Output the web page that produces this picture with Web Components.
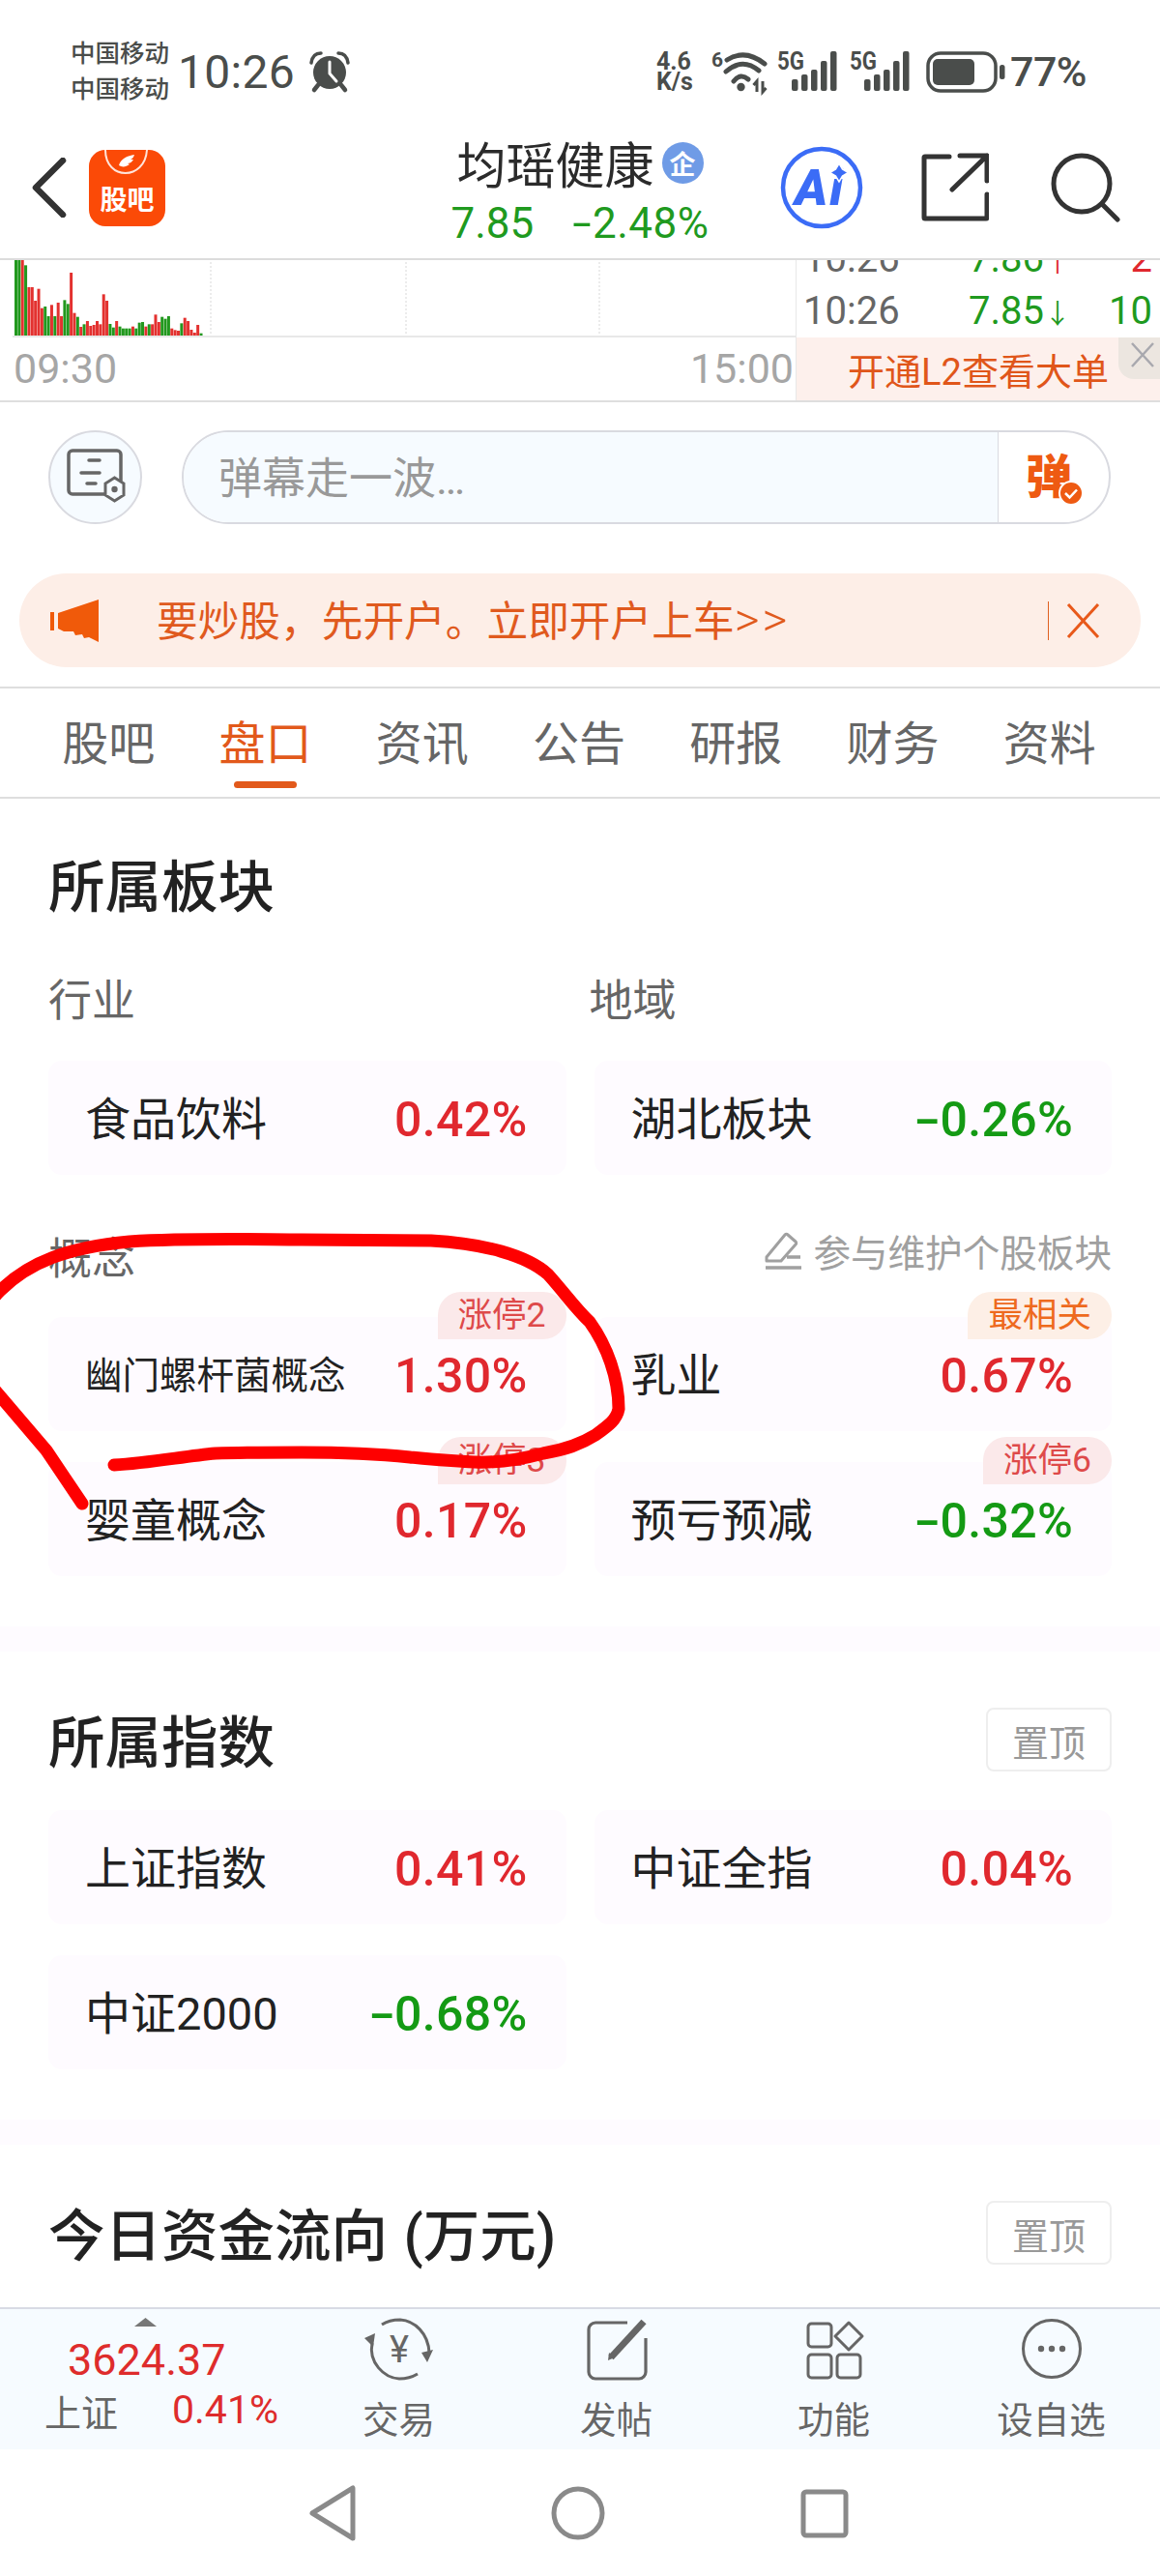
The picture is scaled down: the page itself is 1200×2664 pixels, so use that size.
<!DOCTYPE html>
<html lang="zh">
<head>
<meta charset="utf-8">
<title>均瑶健康</title>
<style>
  html, body {
    margin: 0;
    padding: 0;
    background: #fff;
    font-family: Roboto, "Noto Sans CJK SC", sans-serif;
    color: #222;
  }

  #app {
    position: relative;
    width: 1200px;
    height: 2664px;
    overflow: hidden;
    display: flex;
    flex-direction: column;
  }

  #content {
    flex: 1;
    min-height: 0;
    overflow: hidden;
  }
</style>
</head>
<body>
<div id="app">
  <status-bar></status-bar>
  <stock-header></stock-header>
  <mini-chart></mini-chart>
  <danmu-bar></danmu-bar>
  <promo-banner></promo-banner>
  <tab-bar></tab-bar>

  <div id="content">
    <sector-section heading="所属板块" top="55" bottom="52">
      <plate-grid style="margin-top:64px" gap="36">
        <sub-label>行业</sub-label>
        <sub-label style="margin-left:-5px">地域</sub-label>
        <plate-card name="食品饮料" pct="0.42%" tone="up"></plate-card>
        <plate-card name="湖北板块" pct="-0.26%" tone="down"></plate-card>
      </plate-grid>
      <concept-head></concept-head>
      <plate-grid gap="32">
        <plate-card name="幽门螺杆菌概念" name-size="38.5" pct="1.30%" tone="up" tag="涨停2"></plate-card>
        <plate-card name="乳业" pct="0.67%" tone="up" tag="最相关" tag-tone="orange"></plate-card>
        <plate-card name="婴童概念" pct="0.17%" tone="up" tag="涨停3"></plate-card>
        <plate-card name="预亏预减" pct="-0.32%" tone="down" tag="涨停6"></plate-card>
      </plate-grid>
    </sector-section>
    <section-band></section-band>
    <sector-section heading="所属指数" top="58" bottom="52">
      <pin-button slot="action"></pin-button>
      <plate-grid style="margin-top:40px" gap="32">
        <plate-card name="上证指数" pct="0.41%" tone="up"></plate-card>
        <plate-card name="中证全指" pct="0.04%" tone="up"></plate-card>
        <plate-card name="中证2000" pct="-0.68%" tone="down"></plate-card>
      </plate-grid>
    </sector-section>
    <section-band></section-band>
    <sector-section heading="今日资金流向 (万元)" top="58" bottom="0">
      <pin-button slot="action"></pin-button>
    </sector-section>
  </div>

  <bottom-bar></bottom-bar>
  <nav-bar></nav-bar>
  <ink-mark></ink-mark>
</div>

<script>
class StatusBar extends HTMLElement {
  constructor() {
    super();
    this.attachShadow({ mode: 'open' });
  }

  connectedCallback() {
    this.shadowRoot.innerHTML = `
      <style>
        :host {
          display: flex;
          align-items: center;
          box-sizing: border-box;
          height: 140px;
          padding: 37px 76px 29px 73px;
          color: #4a4d4b;
        }
        .carrier { font-size: 25.5px; line-height: 37px; font-weight: 500; }
        .time { font-size: 48px; margin-left: 9px; letter-spacing: 0.3px; }
        .alarm { margin-left: 15px; }
        .right { margin-left: auto; display: flex; align-items: center; }
        .speed { font-size: 25px; line-height: 21px; font-weight: 700; width: 42px; }
        .pct { font-size: 43px; font-weight: 500; margin-left: 5px; letter-spacing: -0.5px; }
        svg { display: block; overflow: visible; }
        text { font-family: Roboto, sans-serif; font-weight: 700; fill: #4a4d4b; }
      </style>
      <div class="carrier">中国移动<br>中国移动</div>
      <div class="time">10:26</div>
      <svg class="alarm" width="42" height="44" viewBox="0 0 42 44">
        <circle cx="21" cy="23" r="17" fill="#4a4d4b"/>
        <path d="M21 12v12l7 8" fill="none" stroke="#fff" stroke-width="3" stroke-linecap="round"/>
        <path d="M2 13C3 6 7 3 12 3M40 13C39 6 35 3 30 3" fill="none" stroke="#4a4d4b" stroke-width="3.5" stroke-linecap="round"/>
        <path d="M9 36l-4 5M33 36l4 5" stroke="#4a4d4b" stroke-width="4.5" stroke-linecap="round"/>
      </svg>
      <div class="right">
        <div class="speed">4.6<br>K/s</div>
        <svg style="margin-left:16px" width="58" height="46" viewBox="0 0 58 46">
          <text x="-1" y="18" font-size="21">6</text>
          <g fill="none" stroke="#4a4d4b" stroke-linecap="round" stroke-width="5">
            <path d="M15 11Q34 -1 54 15"/>
            <path d="M14 23Q31 8 48 22"/>
            <path d="M22 33Q29 24 37 31"/>
          </g>
          <circle cx="29.5" cy="39" r="4.2" fill="#4a4d4b"/>
          <path d="M46 44V33l-3.5 4M52 33v11l3.5-4" fill="none" stroke="#4a4d4b" stroke-width="3"/>
        </svg>
        <svg style="margin-left:9px" width="62" height="42" viewBox="0 0 62 42">
          <text x="0" y="19" font-size="25" textLength="28" lengthAdjust="spacingAndGlyphs">5G</text>
          <rect x="15" y="29" width="6.5" height="12" rx="2" fill="#4a4d4b"/>
          <rect x="25" y="24" width="6.5" height="17" rx="2" fill="#4a4d4b"/>
          <rect x="35" y="19" width="6.5" height="22" rx="2" fill="#4a4d4b"/>
          <rect x="45" y="10" width="6.5" height="31" rx="2" fill="#4a4d4b"/>
          <rect x="55" y="0" width="6.5" height="41" rx="2" fill="#4a4d4b"/>
        </svg>
        <svg style="margin-left:13px" width="62" height="42" viewBox="0 0 62 42">
          <text x="0" y="19" font-size="25" textLength="28" lengthAdjust="spacingAndGlyphs">5G</text>
          <rect x="15" y="29" width="6.5" height="12" rx="2" fill="#4a4d4b"/>
          <rect x="25" y="24" width="6.5" height="17" rx="2" fill="#4a4d4b"/>
          <rect x="35" y="19" width="6.5" height="22" rx="2" fill="#4a4d4b"/>
          <rect x="45" y="10" width="6.5" height="31" rx="2" fill="#4a4d4b"/>
          <rect x="55" y="0" width="6.5" height="41" rx="2" fill="#4a4d4b"/>
        </svg>
        <svg style="margin-left:17px" width="82" height="43" viewBox="0 0 82 43">
          <rect x="2" y="2" width="70" height="39" rx="13" fill="none" stroke="#4a4d4b" stroke-width="3.5"/>
          <rect x="7" y="8" width="43" height="27" rx="5" fill="#4a4d4b"/>
          <rect x="76" y="14" width="5.5" height="15" rx="2.5" fill="#4a4d4b"/>
        </svg>
        <div class="pct">77%</div>
      </div>
    `;
  }
}
customElements.define('status-bar', StatusBar);

class StockHeader extends HTMLElement {
  constructor() {
    super();
    this.attachShadow({ mode: 'open' });
  }

  connectedCallback() {
    this.shadowRoot.innerHTML = `
      <style>
        :host {
          display: grid;
          grid-template-columns: 1fr auto 1fr;
          box-sizing: border-box;
          height: 129px;
          border-bottom: 2px solid #dcdcdc;
        }
        .left {
          display: flex;
          align-items: center;
          gap: 23px;
          padding: 0 0 19px 33px;
        }
        .center { text-align: center; }
        .title {
          display: flex;
          align-items: center;
          justify-content: center;
          height: 56px;
          font-size: 51px;
          color: #2b2b2b;
        }
        .badge {
          display: flex;
          align-items: center;
          justify-content: center;
          width: 43px;
          height: 43px;
          margin-left: 8px;
          border-radius: 50%;
          background: #6f9be6;
          color: #fff;
          font-size: 27px;
          font-weight: 700;
        }
        .quote {
          display: flex;
          justify-content: center;
          gap: 40px;
          height: 70px;
          line-height: 70px;
          font-size: 44px;
          color: #1f9a1f;
        }
        .rate { letter-spacing: 0.5px; }
        .sign { display: inline-block; transform: scaleX(1.6); margin: 0 4px; }
        .right {
          display: flex;
          align-items: center;
          justify-content: flex-end;
          padding: 0 41px 19px 0;
        }
        svg { display: block; }
        .logo text { font-family: "Noto Sans CJK SC", sans-serif; font-weight: 700; }
        .ai text { font-family: Roboto, sans-serif; font-weight: 900; font-style: italic; }
      </style>
      <div class="left">
        <svg width="36" height="62" viewBox="0 0 36 62">
          <path d="M32 3L4 31l28 28" fill="none" stroke="#333" stroke-width="6.5" stroke-linecap="round" stroke-linejoin="round"/>
        </svg>
        <svg class="logo" width="79" height="79" viewBox="0 0 79 79">
          <rect width="79" height="79" rx="17" fill="#fb4a07"/>
          <path d="M17 0C17 32 58 32 60 0" fill="none" stroke="#fff" stroke-opacity=".85" stroke-width="2"/>
          <path d="M31 16C33 9 40 6 47 5C46 8 45 9 43 10L46 10C44 13 42 14 40 14L42 15C38 18 34 18 31 16Z" fill="#fff"/>
          <text x="39.5" y="62" font-size="28" fill="#fff" text-anchor="middle">股吧</text>
        </svg>
      </div>
      <div class="center">
        <div class="title">均瑶健康<span class="badge">企</span></div>
        <div class="quote"><span>7.85</span><span class="rate"><span class="sign">-</span>2.48%</span></div>
      </div>
      <div class="right">
        <svg class="ai" width="90" height="90" viewBox="0 0 90 90">
          <circle cx="45" cy="45" r="40" fill="none" stroke="#3b6cf6" stroke-width="4.5"/>
          <text x="43" y="63" font-size="52" fill="#3b6cf6" text-anchor="middle" letter-spacing="2">Ai</text>
          <path d="M63 20l3.5 6 6 3.5-6 3.5-3.5 6-3.5-6-6-3.5 6-3.5z" fill="#3b6cf6" stroke="#fff" stroke-width="1.5"/>
        </svg>
        <svg style="margin-left:58px" width="70" height="72" viewBox="0 0 70 72">
          <path d="M29 4H4a1 1 0 0 0-1 1v62a1 1 0 0 0 1 1h63a1 1 0 0 0 1-1V43" fill="none" stroke="#333" stroke-width="5" stroke-linecap="round"/>
          <path d="M32 38L68 3M40 3h28v26" fill="none" stroke="#333" stroke-width="5" stroke-linecap="round" stroke-linejoin="round"/>
        </svg>
        <svg style="margin-left:62px" width="74" height="74" viewBox="0 0 74 74">
          <circle cx="34" cy="33" r="29" fill="none" stroke="#333" stroke-width="5"/>
          <path d="M55 54l16 16" stroke="#333" stroke-width="5" stroke-linecap="round"/>
        </svg>
      </div>
    `;
  }
}
customElements.define('stock-header', StockHeader);

const VOLUME_BARS = 'g240 g240 r240 g218 r150 r150 r108 r145 r85 g90 g60 r95 g60 r102 r60 g110 g98 r195 r70 g58 r27 g35 r45 r30 r33 r45 r35 r128 r108 g36 g25 r45 g28 g22 g22 g22 r28 g22 g40 g42 r28 g35 r35 r65 r42 g58 g52 g60 r22 r17 r15 g38 r55 r45 r18 r9 r33 g7'.split(' ');

class MiniChart extends HTMLElement {
  constructor() {
    super();
    this.attachShadow({ mode: 'open' });
  }

  connectedCallback() {
    const bars = VOLUME_BARS.map((bar, i) => {
      const height = Number(bar.slice(1)) / 3;
      const color = bar[0] === 'g' ? '#22981e' : '#e3312f';
      return `<rect x="${15 + i * 3.36}" y="${80 - height}" width="3" height="${height}" fill="${color}"/>`;
    }).join('');

    this.shadowRoot.innerHTML = `
      <style>
        :host {
          display: flex;
          height: 145px;
          border-bottom: 2px solid #dedede;
        }
        .plot { width: 823px; flex-shrink: 0; }
        .axis { display: block; border-bottom: 2px solid #e8e8e8; margin-left: 13px; }
        .times {
          display: flex;
          justify-content: space-between;
          height: 65px;
          line-height: 65px;
          padding: 0 2px 0 14px;
          font-size: 43px;
          color: #a6a6a6;
        }
        .side {
          flex: 1;
          min-width: 0;
          display: flex;
          flex-direction: column;
          border-left: 1px solid #e8e8e8;
        }
        .ticks {
          height: 80px;
          display: flex;
          flex-direction: column;
          justify-content: flex-end;
          overflow: hidden;
          flex-shrink: 0;
        }
        .row {
          display: flex;
          flex-shrink: 0;
          height: 53px;
          line-height: 53px;
          padding: 0 8px 0 7px;
          font-size: 40px;
          margin-bottom: 1px;
        }
        .t { width: 171px; color: #666; }
        .p { color: #1f9a1f; }
        .q { margin-left: auto; }
        .arrow { font-size: 28px; }
        .red { color: #e0282e; }
        .green { color: #1f9a1f; }
        .l2 {
          position: relative;
          flex: 1;
          display: flex;
          align-items: center;
          justify-content: center;
          background: #fdf0ec;
          color: #e0561a;
          font-size: 38px;
        }
        .close {
          position: absolute;
          top: 0;
          right: 0;
          width: 43px;
          height: 43px;
          border-bottom-left-radius: 16px;
          background: #ece6e0;
        }
        .close svg { display: block; }
      </style>
      <div class="plot">
        <svg class="axis" width="810" height="78" viewBox="13 2 810 78">
          <g stroke="#d8d8d8" stroke-width="1" stroke-dasharray="2 2">
            <path d="M218 0V80M420 0V80M620 0V80"/>
          </g>
          ${bars}
        </svg>
        <div class="times"><span>09:30</span><span>15:00</span></div>
      </div>
      <div class="side">
        <div class="ticks">
          <div class="row"><span class="t">10:26</span><span class="p">7.86<span class="arrow red">↑</span></span><span class="q red">2</span></div>
          <div class="row"><span class="t">10:26</span><span class="p">7.85<span class="arrow">↓</span></span><span class="q green">10</span></div>
        </div>
        <div class="l2">开通L2查看大单
          <div class="close">
            <svg width="43" height="43" viewBox="0 0 43 43">
              <path d="M14 6L36 30M36 6L14 30" stroke="#a8a8ae" stroke-width="2.5"/>
            </svg>
          </div>
        </div>
      </div>
    `;
  }
}
customElements.define('mini-chart', MiniChart);

class DanmuBar extends HTMLElement {
  constructor() {
    super();
    this.attachShadow({ mode: 'open' });
  }

  connectedCallback() {
    this.shadowRoot.innerHTML = `
      <style>
        :host {
          display: flex;
          gap: 41px;
          padding: 29px 51px 51px 50px;
        }
        .circle {
          width: 97px;
          height: 97px;
          box-sizing: border-box;
          border: 2px solid #d9dae0;
          border-radius: 50%;
          background: #f6fbff;
          display: flex;
          align-items: center;
          justify-content: center;
          flex-shrink: 0;
        }
        .input {
          flex: 1;
          display: flex;
          height: 97px;
          box-sizing: border-box;
          border: 2px solid #d9dae0;
          border-radius: 50px;
          overflow: hidden;
        }
        .placeholder {
          flex: 1;
          background: #f6fbff;
          color: #999;
          font-size: 45px;
          line-height: 97px;
          padding-left: 36px;
        }
        .send {
          width: 115px;
          border-left: 1px solid #d9dae0;
          display: flex;
          align-items: center;
          padding-left: 28px;
          box-sizing: border-box;
        }
        .send svg { display: block; }
        .send text { font-family: "Noto Sans CJK SC", sans-serif; font-weight: 900; }
      </style>
      <div class="circle">
        <svg width="64" height="60" viewBox="0 0 64 60">
          <path d="M47 47H8a4 4 0 0 1-4-4V6a4 4 0 0 1 4-4h46a4 4 0 0 1 4 4v27" fill="none" stroke="#666" stroke-width="3.5" stroke-linecap="round"/>
          <path d="M25 12h11M17 25h19M23 36h9" stroke="#666" stroke-width="3.5" stroke-linecap="round"/>
          <path d="M51.5 30l9.5 6v12l-9.5 6-9.5-6V36z" fill="#f6fbff" stroke="#666" stroke-width="3"/>
          <circle cx="51.5" cy="42" r="3.2" fill="#666"/>
        </svg>
      </div>
      <div class="input">
        <div class="placeholder">弹幕走一波…</div>
        <div class="send">
          <svg width="62" height="62" viewBox="0 0 62 62">
            <text x="0" y="47" font-size="48" fill="#ee5a12">弹</text>
            <circle cx="47" cy="47" r="12" fill="#ee5a12" stroke="#fff" stroke-width="2"/>
            <path d="M41 47l4.5 4.5 7.5-8" fill="none" stroke="#fff" stroke-width="2.5"/>
          </svg>
        </div>
      </div>
    `;
  }
}
customElements.define('danmu-bar', DanmuBar);

class PromoBanner extends HTMLElement {
  constructor() {
    super();
    this.attachShadow({ mode: 'open' });
  }

  connectedCallback() {
    this.shadowRoot.innerHTML = `
      <style>
        :host {
          display: flex;
          align-items: center;
          height: 97px;
          margin: 0 20px 20px;
          padding: 0 42px 0 32px;
          border-radius: 50px;
          background: #fdeee7;
        }
        .text {
          margin: -6px 0 0 60px;
          font-size: 42.7px;
          color: #e05a1e;
        }
        .more { font-size: 50px; line-height: 40px; font-weight: 300; letter-spacing: 3px; }
        .bar { margin-left: auto; width: 1px; height: 40px; background: #e06020; }
        svg { display: block; flex-shrink: 0; }
      </style>
      <svg width="50" height="44" viewBox="0 0 50 44">
        <rect x="0" y="13" width="4" height="19" fill="#f05a0a"/>
        <path d="M8 14L50 0V44L40 39L35 40L33 36L26 37L24 33H14L8 30Z" fill="#f05a0a"/>
      </svg>
      <div class="text">要炒股，先开户。立即开户上车<span class="more">&gt;&gt;</span></div>
      <div class="bar"></div>
      <svg style="margin-left:18px" width="35" height="38" viewBox="0 0 35 38">
        <path d="M2 2L33 36M33 2L2 36" stroke="#e8591a" stroke-width="3"/>
      </svg>
    `;
  }
}
customElements.define('promo-banner', PromoBanner);

class TabBar extends HTMLElement {
  constructor() {
    super();
    this.attachShadow({ mode: 'open' });
  }

  connectedCallback() {
    const tabs = ['股吧', '盘口', '资讯', '公告', '研报', '财务', '资料'];
    this.shadowRoot.innerHTML = `
      <style>
        :host {
          display: flex;
          height: 112px;
          padding: 0 33px 0 31px;
          border-top: 2px solid #dedede;
          border-bottom: 2px solid #dedede;
        }
        .tab {
          position: relative;
          flex: 1;
          text-align: center;
          font-size: 48px;
          line-height: 115px;
          color: #666;
        }
        .tab.active { color: #e2591b; }
        .tab.active::after {
          content: '';
          position: absolute;
          left: 50%;
          bottom: 9px;
          width: 65px;
          height: 7px;
          margin-left: -32px;
          border-radius: 4px;
          background: #e2591b;
        }
      </style>
      ${tabs.map((tab, i) => `<div class="tab ${i === 1 ? 'active' : ''}">${tab}</div>`).join('')}
    `;
  }
}
customElements.define('tab-bar', TabBar);

class SectorSection extends HTMLElement {
  constructor() {
    super();
    this.attachShadow({ mode: 'open' });
  }

  connectedCallback() {
    const top = this.getAttribute('top') || 0;
    const bottom = this.getAttribute('bottom') || 0;
    this.shadowRoot.innerHTML = `
      <style>
        :host {
          display: block;
          padding: ${top}px 50px ${bottom}px;
        }
        .head {
          display: flex;
          align-items: center;
          justify-content: space-between;
          height: 66px;
        }
        h2 {
          margin: 8px 0 0;
          font-size: 58.5px;
          line-height: 66px;
          font-weight: 500;
          word-spacing: 2px;
          color: #222;
        }
      </style>
      <div class="head">
        <h2>${this.getAttribute('heading') || ''}</h2>
        <slot name="action"></slot>
      </div>
      <slot></slot>
    `;
  }
}
customElements.define('sector-section', SectorSection);

class PinButton extends HTMLElement {
  constructor() {
    super();
    this.attachShadow({ mode: 'open' });
  }

  connectedCallback() {
    this.shadowRoot.innerHTML = `
      <style>
        :host {
          display: flex;
          align-items: center;
          justify-content: center;
          box-sizing: border-box;
          width: 130px;
          height: 66px;
          border: 2px solid #eeeeee;
          border-radius: 8px;
          font-size: 38px;
          color: #999;
        }
      </style>
      置顶
    `;
  }
}
customElements.define('pin-button', PinButton);

class PlateGrid extends HTMLElement {
  constructor() {
    super();
    this.attachShadow({ mode: 'open' });
  }

  connectedCallback() {
    this.shadowRoot.innerHTML = `
      <style>
        :host {
          display: grid;
          grid-template-columns: 1fr 1fr;
          column-gap: 29px;
          row-gap: ${this.getAttribute('gap') || 32}px;
        }
      </style>
      <slot></slot>
    `;
  }
}
customElements.define('plate-grid', PlateGrid);

class SubLabel extends HTMLElement {
  constructor() {
    super();
    this.attachShadow({ mode: 'open' });
  }

  connectedCallback() {
    this.shadowRoot.innerHTML = `
      <style>
        :host {
          display: block;
          height: 50px;
          line-height: 50px;
          font-size: 45px;
          color: #666;
        }
      </style>
      <slot></slot>
    `;
  }
}
customElements.define('sub-label', SubLabel);

class ConceptHead extends HTMLElement {
  constructor() {
    super();
    this.attachShadow({ mode: 'open' });
  }

  connectedCallback() {
    this.shadowRoot.innerHTML = `
      <style>
        :host {
          display: flex;
          align-items: center;
          height: 50px;
          margin: 58px 0 39px;
        }
        .label { font-size: 45px; color: #666; }
        .link {
          display: flex;
          align-items: center;
          gap: 11px;
          margin: -10px 0 0 auto;
          font-size: 38.6px;
          color: #a0a0a0;
        }
        svg { display: block; }
      </style>
      <div class="label">概念</div>
      <div class="link">
        <svg width="40" height="40" viewBox="0 0 40 40">
          <path d="M3 27L22 4a2 2 0 0 1 3 0l8 7a2 2 0 0 1 0 3L18 31H3z" fill="none" stroke="#a0a0a0" stroke-width="3" stroke-linejoin="round"/>
          <path d="M24 27h14M2 38h37" stroke="#a0a0a0" stroke-width="3.5"/>
        </svg>
        参与维护个股板块
      </div>
    `;
  }
}
customElements.define('concept-head', ConceptHead);

class PlateCard extends HTMLElement {
  constructor() {
    super();
    this.attachShadow({ mode: 'open' });
  }

  connectedCallback() {
    const tag = this.getAttribute('tag');
    const tagTone = this.getAttribute('tag-tone') || 'red';
    const tone = this.getAttribute('tone') || 'up';
    const nameSize = this.getAttribute('name-size') || 47;
    const pct = this.getAttribute('pct');
    const pctHtml = pct[0] === '-' ? `<span class="sign">-</span>${pct.slice(1)}` : pct;
    this.shadowRoot.innerHTML = `
      <style>
        :host {
          position: relative;
          display: flex;
          align-items: center;
          justify-content: space-between;
          box-sizing: border-box;
          height: 118px;
          padding: 0 40px 0 38px;
          border-radius: 14px;
          background: #fefbff;
        }
        .name { font-size: ${nameSize}px; color: #222; white-space: nowrap; margin-top: -5px; }
        .pct { font-size: 50px; font-weight: 500; letter-spacing: 0.3px; margin-top: 3px; }
        .sign { display: inline-block; transform: scaleX(1.6); margin: 0 4px; }
        .up { color: #e0282e; }
        .down { color: #149a14; }
        .tag {
          position: absolute;
          top: -26px;
          right: 0;
          height: 49px;
          line-height: 49px;
          padding: 0 21px;
          border-radius: 24px 24px 24px 0;
          font-size: 35.5px;
        }
        .tag.red { background: #fbe9ea; color: #de4a4a; }
        .tag.orange { background: #fdefe6; color: #ee6a1e; }
      </style>
      <span class="name">${this.getAttribute('name')}</span>
      <span class="pct ${tone}">${pctHtml}</span>
      ${tag ? `<span class="tag ${tagTone}">${tag}</span>` : ''}
    `;
  }
}
customElements.define('plate-card', PlateCard);

class SectionBand extends HTMLElement {
  constructor() {
    super();
    this.attachShadow({ mode: 'open' });
  }

  connectedCallback() {
    this.shadowRoot.innerHTML = `
      <style>
        :host { display: block; height: 26px; background: #fefbff; }
      </style>
    `;
  }
}
customElements.define('section-band', SectionBand);

class BottomBar extends HTMLElement {
  constructor() {
    super();
    this.attachShadow({ mode: 'open' });
  }

  connectedCallback() {
    this.shadowRoot.innerHTML = `
      <style>
        :host {
          display: flex;
          flex-shrink: 0;
          box-sizing: border-box;
          height: 147px;
          border-top: 2px solid #d8dbe4;
          background: #f6fbff;
        }
        .quote { width: 300px; flex-shrink: 0; box-sizing: border-box; padding: 9px 0 0 46px; }
        .caret { display: block; margin-left: 93px; }
        .value { margin: 12px 0 0 24px; font-size: 45px; line-height: 46px; color: #de2c2c; }
        .sub { display: flex; align-items: center; height: 56px; }
        .sub b { font-weight: 400; font-size: 38px; color: #666; }
        .sub i { font-style: normal; font-size: 41px; color: #de2c2c; margin-left: 56px; }
        .tool { flex: 1; text-align: center; padding-top: 9px; }
        .tool svg { display: block; margin: 0 auto; }
        .tool div { margin-top: 15px; font-size: 37.5px; line-height: 50px; color: #666; }
        .tool text { font-family: Roboto, sans-serif; fill: #666; }
      </style>
      <div class="quote">
        <svg class="caret" width="23" height="9" viewBox="0 0 23 9"><path d="M11.5 0L23 9H0z" fill="#777"/></svg>
        <div class="value">3624.37</div>
        <div class="sub"><b>上证</b><i>0.41%</i></div>
      </div>
      <div class="tool">
        <svg width="80" height="66" viewBox="0 0 80 66">
          <path d="M12 26C8 46 24 62 40 63C46 63 54 61 59 58" fill="none" stroke="#666" stroke-width="3"/>
          <path d="M22 7C28 3 34 2 41 2C56 3 70 16 71 36" fill="none" stroke="#666" stroke-width="3"/>
          <path d="M4 21L15 16L13 30Z" fill="#666"/>
          <path d="M63 36L75 33L69 46Z" fill="#666"/>
          <text x="40" y="46" font-size="38" text-anchor="middle">¥</text>
        </svg>
        <div>交易</div>
      </div>
      <div class="tool">
        <svg width="66" height="66" viewBox="0 0 66 66">
          <path d="M44 5H11a7 7 0 0 0-7 7v44a7 7 0 0 0 7 7h45a7 7 0 0 0 7-7V21" fill="none" stroke="#666" stroke-width="3.2"/>
          <path d="M27 41L61 4" stroke="#666" stroke-width="7"/>
          <path d="M24 44l1-8 6 5z" fill="#666"/>
        </svg>
        <div>发帖</div>
      </div>
      <div class="tool">
        <svg width="66" height="66" viewBox="0 0 66 66">
          <g fill="none" stroke="#666" stroke-width="3">
            <rect x="6" y="6" width="24" height="24" rx="3.5"/>
            <rect x="6" y="38" width="24" height="24" rx="3.5"/>
            <rect x="36" y="38" width="24" height="24" rx="3.5"/>
            <path d="M48 5l14 14-14 14-14-14z" stroke-linejoin="round"/>
          </g>
        </svg>
        <div>功能</div>
      </div>
      <div class="tool">
        <svg width="66" height="66" viewBox="0 0 66 66">
          <circle cx="33" cy="32" r="29.5" fill="none" stroke="#666" stroke-width="3"/>
          <circle cx="22" cy="32" r="3.2" fill="#666"/>
          <circle cx="33" cy="32" r="3.2" fill="#666"/>
          <circle cx="44" cy="32" r="3.2" fill="#666"/>
        </svg>
        <div>设自选</div>
      </div>
    `;
  }
}
customElements.define('bottom-bar', BottomBar);

class NavBar extends HTMLElement {
  constructor() {
    super();
    this.attachShadow({ mode: 'open' });
  }

  connectedCallback() {
    this.shadowRoot.innerHTML = `
      <style>
        :host {
          display: flex;
          align-items: center;
          flex-shrink: 0;
          box-sizing: border-box;
          height: 131px;
          padding: 0 0 0 318px;
          background: #fff;
        }
        svg { display: block; }
      </style>
      <svg width="52" height="60" viewBox="0 0 52 60">
        <path d="M5 30L47 4V56Z" fill="none" stroke="#8a8a8a" stroke-width="5" stroke-linejoin="round"/>
      </svg>
      <svg style="margin-left:198px" width="60" height="60" viewBox="0 0 60 60">
        <circle cx="30" cy="30" r="25" fill="none" stroke="#8a8a8a" stroke-width="5"/>
      </svg>
      <svg style="margin-left:197px" width="56" height="60" viewBox="0 0 56 60">
        <rect x="6" y="8" width="44" height="45" rx="3" fill="none" stroke="#8a8a8a" stroke-width="5"/>
      </svg>
    `;
  }
}
customElements.define('nav-bar', NavBar);

// hand drawn circle on top of the screenshot, its place on the page is the content
class InkMark extends HTMLElement {
  constructor() {
    super();
    this.attachShadow({ mode: 'open' });
  }

  connectedCallback() {
    this.shadowRoot.innerHTML = `
      <style>
        :host {
          position: absolute;
          top: 0;
          left: 0;
          pointer-events: none;
        }
        svg { display: block; }
      </style>
      <svg width="1200" height="2664" viewBox="0 0 1200 2664">
        <path d="M85 1555L48 1500L-5 1438C-40 1400 -30 1365 0 1335C30 1305 70 1290 134 1284C200 1280 270 1282 312 1282L446 1283C500 1286 545 1298 567 1318C585 1338 595 1353 610 1367C628 1392 640 1425 640 1457C638 1468 630 1474 616 1484C600 1494 585 1499 562 1503C540 1509 515 1513 491 1512C465 1511 445 1509 424 1507C385 1503 350 1502 312 1502C280 1502 250 1502 223 1503C190 1506 155 1513 118 1515" fill="none" stroke="#fe0000" stroke-width="13" stroke-linecap="round" stroke-linejoin="round"/>
      </svg>
    `;
  }
}
customElements.define('ink-mark', InkMark);
</script>
</body>
</html>
